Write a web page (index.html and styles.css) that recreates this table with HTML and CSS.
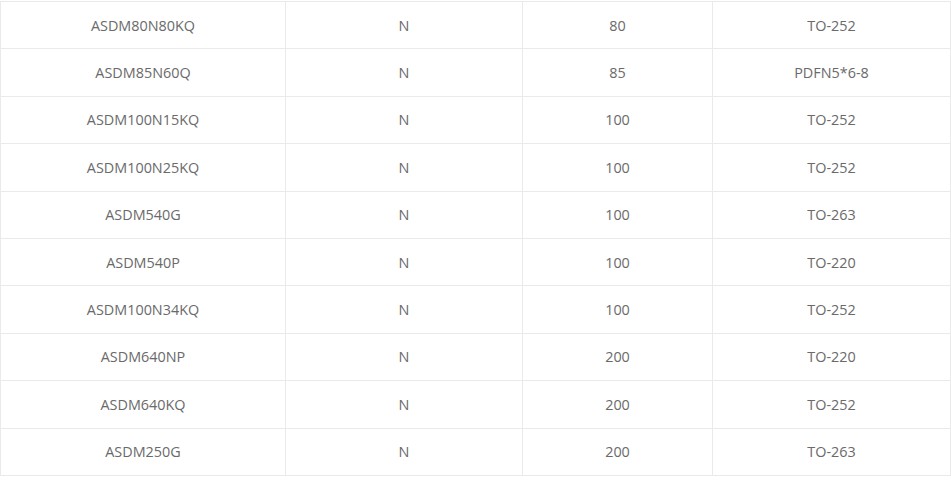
FILE: index.html
```html
<!DOCTYPE html>
<html>
<head>
<meta charset="utf-8">
<link rel="stylesheet" href="styles.css">
</head>
<body>
<div class="wrap">
<table class="spec">
<colgroup><col class="c1"><col class="c2"><col class="c3"><col class="c4"></colgroup>
<tbody>
<tr><td>ASDM80N80KQ</td><td>N</td><td>80</td><td>TO-252</td></tr>
<tr><td>ASDM85N60Q</td><td>N</td><td>85</td><td>PDFN5*6-8</td></tr>
<tr><td>ASDM100N15KQ</td><td>N</td><td>100</td><td>TO-252</td></tr>
<tr><td>ASDM100N25KQ</td><td>N</td><td>100</td><td>TO-252</td></tr>
<tr><td>ASDM540G</td><td>N</td><td>100</td><td>TO-263</td></tr>
<tr><td>ASDM540P</td><td>N</td><td>100</td><td>TO-220</td></tr>
<tr><td>ASDM100N34KQ</td><td>N</td><td>100</td><td>TO-252</td></tr>
<tr><td>ASDM640NP</td><td>N</td><td>200</td><td>TO-220</td></tr>
<tr><td>ASDM640KQ</td><td>N</td><td>200</td><td>TO-252</td></tr>
<tr><td>ASDM250G</td><td>N</td><td>200</td><td>TO-263</td></tr>
</tbody>
</table>
</div>
</body>
</html>
```
FILE: styles.css
```css
html, body {
  margin: 0;
  padding: 0;
  background: #fff;
}
.wrap {
  padding-top: 1px;
}
.spec {
  width: 950px;
  border-collapse: collapse;
  table-layout: fixed;
  font-family: "Open Sans", "Noto Sans", sans-serif;
  font-size: 14.4px;
  color: #6a6a6a;
}
.c1 { width: 285px; }
.c2 { width: 237px; }
.c3 { width: 190px; }
.c4 { width: 238px; }
.spec td {
  border: 1px solid #eaeaea;
  height: 46.4px;
  padding: 0;
  text-align: center;
  vertical-align: middle;
}
```
